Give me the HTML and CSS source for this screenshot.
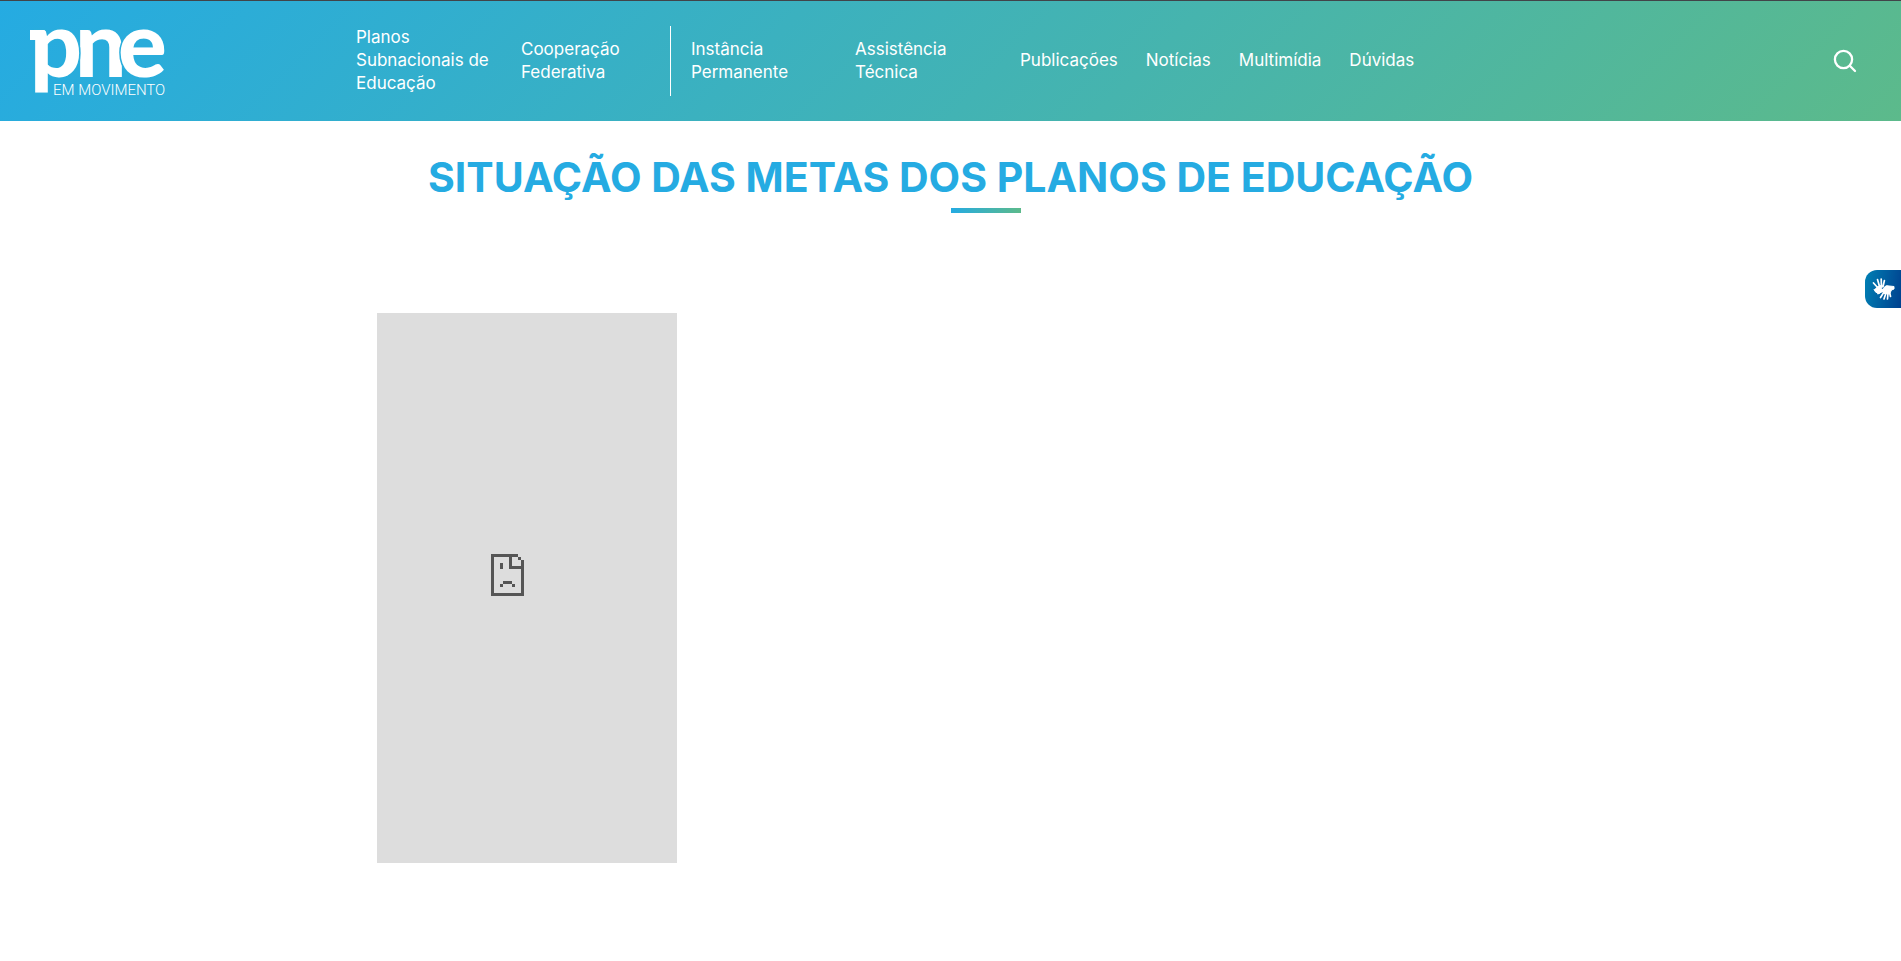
FILE: index.html
```html
<!DOCTYPE html>
<html lang="pt-BR">
<head>
<meta charset="utf-8">
<title>PNE em Movimento</title>
<link rel="stylesheet" href="styles.css">
</head>
<body>
<header class="site-header">
  <a class="logo" href="#" aria-label="PNE em Movimento">
    <svg width="140" height="72" viewBox="0 0 140 72">
      <g class="logo-letters">
        <text x="47" y="52">n</text>
        <text x="2" y="52">p</text>
        <text x="90" y="52">e</text>
      </g>
      <path d="M2 5H15Q18 5 18 8V15H2Z" fill="#fff"/>
      <text class="logo-tagline" x="25" y="70">EM MOVIMENTO</text>
    </svg>
  </a>
  <nav class="menu">
    <a class="wide" href="#">Planos Subnacionais de Educação</a>
    <a class="wide" href="#">Cooperação Federativa</a>
    <a class="wide divided" href="#">Instância Permanente</a>
    <a class="wide" href="#">Assistência Técnica</a>
    <a href="#">Publicações</a>
    <a href="#">Notícias</a>
    <a href="#">Multimídia</a>
    <a href="#">Dúvidas</a>
  </nav>
  <button class="search" aria-label="Buscar">
    <svg width="24" height="24" viewBox="0 0 24 24" fill="none" stroke="#fff" stroke-width="2.300" stroke-linecap="round"><circle cx="10.500" cy="10.500" r="8.600"/><path d="M16.800 16.800L22 22"/></svg>
  </button>
</header>
<main class="content">
  <h1 class="title">SITUAÇÃO DAS METAS DOS PLANOS DE EDUCAÇÃO</h1>
  <div class="title-rule"></div>
  <div class="container">
    <div class="frame">
      <svg width="33" height="42" viewBox="0 0 11 14" fill="#555" shape-rendering="crispEdges"><path d="M0 0H9V1H7V4H10V2H11V14H0ZM1 1V13H10V5H6V1ZM9 1H10V2H9ZM3 3H4V5H3ZM4 9H7V10H4ZM3 10H4V11H3ZM7 10H8V11H7Z" fill-rule="evenodd"/></svg>
    </div>
  </div>
</main>
<button class="libras" aria-label="Acessível em Libras">
  <svg width="24" height="24" viewBox="0 0 24 24" fill="none" stroke="#fff" stroke-width="1.700" stroke-linecap="round" stroke-linejoin="round"><path d="M2.500 6L7 11M6.500 2.500L8.700 10M10.200 2L10.400 9M13.400 3.500L12 9.500"/><path d="M6 10Q9 7.500 12 9L10 12L12 14L8 16.500Q4 16 3 12.500" fill="#fff" stroke-width="1"/><path d="M12.500 11Q15 7.500 18 9L23 9.500V12L20.500 13L18.500 17L13 16.500L11 14Z" fill="#fff" stroke-width="1"/><path d="M12 13.500L7 16.500M13 15L9.500 20.500M15 16L13 22M17 16L16.500 22M18.500 15L19.500 19.500"/></svg>
</button>
</body>
</html>
```
FILE: styles.css
```css
* { box-sizing: border-box; }
body {
  margin: 0;
  background: #fff;
  font-family: Inter, "Open Sans", sans-serif;
}
a { color: inherit; text-decoration: none; }
button { border: 0; padding: 0; background: none; cursor: pointer; }
svg { display: block; overflow: visible; }

.site-header {
  display: flex;
  align-items: center;
  min-height: 121px;
  padding: 0 44px 0 28px;
  border-top: 1px solid #414449;
  background: linear-gradient(135deg, #25abe2, #5cba8b);
  color: #fff;
}
.logo { flex: 0 0 328px; }
.logo-letters {
  font: 900 91px Lato, sans-serif;
  fill: #fff;
  stroke: #29addc;
  stroke-width: 3px;
  paint-order: stroke;
}
.logo-tagline { font: 300 15px Roboto, sans-serif; fill: #fff; }

.menu {
  display: flex;
  align-items: center;
  gap: 28px;
  flex: 1;
  padding-bottom: 1px;
  font-size: 17px;
  line-height: 23px;
}
.wide { width: 137px; }
.divided {
  display: flex;
  align-items: center;
  width: 157px;
  height: 70px;
  margin-left: -16px;
  padding-left: 20px;
  border-left: 1px solid #fff;
}

.title {
  margin: 0;
  padding-top: 32px;
  color: #25abe2;
  font-size: 41px;
  font-weight: 700;
  line-height: 48px;
  text-align: center;
}
.title-rule {
  width: 70px;
  height: 5px;
  margin: 7px 0 0 50%;
  background: linear-gradient(90deg, #25abe2, #5cba8b);
}
.container { max-width: 1148px; margin: 100px auto 0; }
.frame {
  display: flex;
  align-items: center;
  justify-content: center;
  width: 300px;
  height: 550px;
  padding: 0 39px 26px 0;
  background: #ddd;
}
.libras {
  position: fixed;
  top: 270px;
  right: 0;
  display: grid;
  place-items: center;
  width: 36px;
  height: 38px;
  border-radius: 12px 0 0 12px;
  background: linear-gradient(100deg, #0080b4, #00408e);
}
```
